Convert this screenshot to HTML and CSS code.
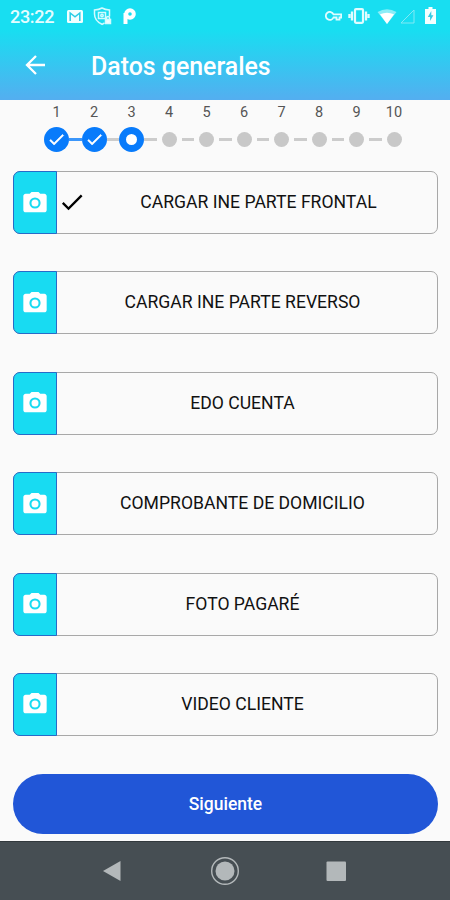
FILE: index.html
```html
<!DOCTYPE html>
<html lang="es">
<head>
    <meta charset="UTF-8">
    <meta name="viewport" content="width=device-width, initial-scale=1.0">
    <title>Datos generales</title>
    <link rel="stylesheet" href="styles.css">
</head>
<body>

<svg class="sprite" aria-hidden="true">
    <symbol id="camera" viewBox="0 0 24 24">
        <path fill-rule="evenodd" d="M9 2.500 7.500 4H4c-1.100 0-2 .9-2 2v12c0 1.100.9 2 2 2h16c1.100 0 2-.9 2-2V6c0-1.100-.9-2-2-2h-3.500L15 2.500zM12 16.800a4.800 4.800 0 1 1 0-9.600 4.800 4.800 0 0 1 0 9.600z"/>
        <circle cx="12" cy="12" r="3"/>
    </symbol>
    <symbol id="check" viewBox="0 0 24 24">
        <path d="M9 16.200 4.800 12l-1.400 1.400L9 19 21 7l-1.400-1.400z"/>
    </symbol>
</svg>

<header class="header">
    <div class="status">
        <span class="clock">23:22</span>
        <svg class="mail" viewBox="0 0 16 13">
            <rect width="16" height="13" rx="1.500" fill="#f1ffff"/>
            <path d="M3.200 11V3l4.800 3.800L12.800 3v8" fill="none" stroke="#28cde5" stroke-width="1.500"/>
        </svg>
        <svg class="shield" viewBox="0 0 19 19" fill="none" stroke="#d3fbff" stroke-width="1.500">
            <path d="M11.500 16 9 17.300C4 15 1.500 11.500 1.500 7V3Q6 2.800 9 1q3 1.800 7.500 2v6.500"/>
            <rect x="5.500" y="5.500" width="7" height="6"/>
            <circle cx="9" cy="8.500" r="1.200"/>
            <path d="M13.500 12v-1a1.500 1.500 0 0 1 3 0v1"/>
            <rect x="12.500" y="12.500" width="5" height="4" fill="#effeff"/>
        </svg>
        <svg class="p-logo" viewBox="0 0 13 16" fill="none" stroke="#fff" stroke-width="4">
            <circle cx="7" cy="6" r="3.800"/>
            <path d="M2.500 5v11"/>
        </svg>
        <svg class="key" viewBox="0 0 17 10" fill="none" stroke="#dffcff" stroke-width="1.800">
            <path d="M8.500 3.300h7.700v3.200h-1.700v2.200h-3V6.500h-3A4 4 0 1 1 8.500 3.300z"/>
        </svg>
        <svg class="vibrate" viewBox="0 0 22 16" fill="none" stroke="#e0fcff">
            <rect x="7" y="1.200" width="8" height="13.600" rx="1" stroke-width="2.200"/>
            <path d="M4 3.500v9M18 3.500v9" stroke-width="2.300"/>
            <path d="M1.500 6v4M20.500 6v4" stroke-width="2.400"/>
        </svg>
        <svg class="wifi" viewBox="0 0 20 15">
            <path d="M.5 3Q10-2.500 19.500 3L10 15z" fill="#8cedf7"/>
            <path d="M3 5.200q7-3 14 0L10 15z" fill="#fff"/>
        </svg>
        <svg class="signal" viewBox="0 0 15 15">
            <path d="M1 14 14 1v13z" fill="none" stroke="#80e9f5" stroke-width="1"/>
        </svg>
        <svg class="battery" viewBox="0 0 11 17">
            <path d="M3.500 0h4v2H11v15H0V2h3.500z" fill="#f5ffff"/>
            <path d="M6.300 4 2.800 10h2.300v4l3.300-5.800H6.300z" fill="#36cce4"/>
        </svg>
    </div>
    <div class="toolbar">
        <svg class="back" viewBox="0 0 20 20">
            <path d="M20 10H2M11 1 2 10l9 9" fill="none" stroke="#fff" stroke-width="2.300"/>
        </svg>
        <h1>Datos generales</h1>
    </div>
</header>

<main>
    <div class="steps">
        <div class="step done"><span>1</span><i><svg><use href="#check"/></svg></i></div>
        <b class="line blue"></b>
        <div class="step done"><span>2</span><i><svg><use href="#check"/></svg></i></div>
        <b class="line"></b>
        <div class="step current"><span>3</span><i></i></div>
        <b class="line"></b>
        <div class="step"><span>4</span><i></i></div>
        <b class="line"></b>
        <div class="step"><span>5</span><i></i></div>
        <b class="line"></b>
        <div class="step"><span>6</span><i></i></div>
        <b class="line"></b>
        <div class="step"><span>7</span><i></i></div>
        <b class="line"></b>
        <div class="step"><span>8</span><i></i></div>
        <b class="line"></b>
        <div class="step"><span>9</span><i></i></div>
        <b class="line"></b>
        <div class="step"><span>10</span><i></i></div>
    </div>

    <div class="uploads">
        <div class="upload">
            <div class="photo"><svg><use href="#camera"/></svg></div>
            <svg class="loaded"><use href="#check"/></svg>
            <p>CARGAR INE PARTE FRONTAL</p>
        </div>
        <div class="upload">
            <div class="photo"><svg><use href="#camera"/></svg></div>
            <p>CARGAR INE PARTE REVERSO</p>
        </div>
        <div class="upload">
            <div class="photo"><svg><use href="#camera"/></svg></div>
            <p>EDO CUENTA</p>
        </div>
        <div class="upload">
            <div class="photo"><svg><use href="#camera"/></svg></div>
            <p>COMPROBANTE DE DOMICILIO</p>
        </div>
        <div class="upload">
            <div class="photo"><svg><use href="#camera"/></svg></div>
            <p>FOTO PAGARÉ</p>
        </div>
        <div class="upload">
            <div class="photo"><svg><use href="#camera"/></svg></div>
            <p>VIDEO CLIENTE</p>
        </div>
    </div>

    <button class="next" type="button">Siguiente</button>
</main>

<nav class="navbar">
    <svg viewBox="0 0 30 30"><path d="M4 15 21.500 5v20z"/></svg>
    <svg viewBox="0 0 30 30"><circle cx="15" cy="15" r="13.300" fill="none" stroke="#b3b8ba" stroke-width="1.400"/><circle cx="15" cy="15" r="9.500"/></svg>
    <svg viewBox="0 0 30 30"><rect x="5.500" y="5.500" width="19.500" height="19.500" rx="1"/></svg>
</nav>

</body>
</html>
```

FILE: styles.css
```css
* {
    margin: 0;
    padding: 0;
    box-sizing: border-box;
}

body {
    width: 450px;
    height: 900px;
    display: flex;
    flex-direction: column;
    font-family: Roboto, sans-serif;
    background-color: #fafafa;
    color: #111;
    overflow: hidden;
}

svg {
    display: block;
    flex: none;
}

.sprite {
    display: none;
}

/* Header */
.header {
    height: 100px;
    background: linear-gradient(#18def1 30%, #54aef0);
    color: #fff;
}

.status {
    height: 32px;
    display: flex;
    align-items: center;
    padding: 0 14px 0 10px;
}

.clock {
    width: 57px;
    font-size: 18px;
    font-weight: 500;
    letter-spacing: -0.3px;
    color: #e4fdff;
}

.mail {
    width: 16px;
    height: 13px;
}

.shield {
    width: 19px;
    height: 19px;
    margin-left: 10px;
}

.p-logo {
    width: 13px;
    height: 16px;
    margin-left: 11px;
}

.key {
    width: 17px;
    height: 10px;
    margin-left: auto;
}

.vibrate {
    width: 22px;
    height: 16px;
    margin-left: 6px;
}

.wifi {
    width: 20px;
    height: 15px;
    margin-left: 7px;
}

.signal {
    width: 15px;
    height: 15px;
    margin-left: 3px;
}

.battery {
    width: 11px;
    height: 17px;
    margin: -2px 0 0 10px;
}

.toolbar {
    height: 68px;
    display: flex;
    align-items: center;
    padding-left: 25px;
}

.back {
    width: 20px;
    height: 20px;
    margin-top: -2px;
}

h1 {
    margin-left: 46px;
    font-size: 24.9px;
    font-weight: 500;
}

/* Steps */
.steps {
    display: flex;
    align-items: flex-end;
    padding: 4px 0 0 44px;
}

.step {
    width: 25px;
    display: flex;
    flex-direction: column;
    align-items: center;
    font-size: 14.5px;
    line-height: 17px;
    color: #555;
}

.step i {
    width: 15px;
    height: 15px;
    margin: 11px 0 5px;
    border-radius: 50%;
    background-color: #c8c8c8;
}

.step.done i,
.step.current i {
    width: 25px;
    height: 25px;
    margin: 6px 0 0;
    background-color: #087bfb;
}

.step.done svg {
    width: 19px;
    height: 19px;
    margin: 3px;
    fill: #fff;
    stroke: #fff;
    stroke-width: 0.8px;
}

.step.current i {
    border: 7px solid #087bfb;
    background-color: #fff;
}

.line {
    width: 12.5px;
    height: 3px;
    margin-bottom: 11px;
    background-color: #ccc;
}

.line.blue {
    background-color: #3b96fa;
}

/* Upload buttons */
.uploads {
    display: flex;
    flex-direction: column;
    gap: 37.4px;
    padding: 19px 12px 0 13px;
}

.upload {
    height: 63px;
    display: flex;
    align-items: center;
    border: 1px solid #a8a8a8;
    border-radius: 7px;
}

.photo {
    width: 44px;
    height: 63px;
    margin: -1px 0 -1px -1px;
    display: flex;
    align-items: center;
    justify-content: center;
    background-color: #18dbf2;
    border: 1px solid #276bc8;
    border-radius: 7px 0 0 7px;
}

.photo svg {
    width: 28px;
    height: 28px;
    fill: #fff;
}

.loaded {
    width: 28px;
    height: 28px;
    margin: -2px 3px 0 1px;
}

.upload p {
    flex: 1;
    padding: 0 9px 1px 0;
    text-align: center;
    font-size: 17.6px;
}

/* Main button */
.next {
    display: block;
    width: 425px;
    height: 60px;
    margin: 38px 0 0 13px;
    padding-top: 1px;
    border: none;
    border-radius: 30px;
    background-color: #2156d7;
    color: #fff;
    font-family: inherit;
    font-size: 17.5px;
    font-weight: 500;
}

/* Android navigation */
.navbar {
    height: 59px;
    margin-top: auto;
    display: flex;
    align-items: center;
    justify-content: center;
    gap: 81px;
    background-color: #464e53;
    border-top: 1px solid #32393d;
}

.navbar svg {
    width: 30px;
    height: 30px;
    fill: #b3b8ba;
}
```
